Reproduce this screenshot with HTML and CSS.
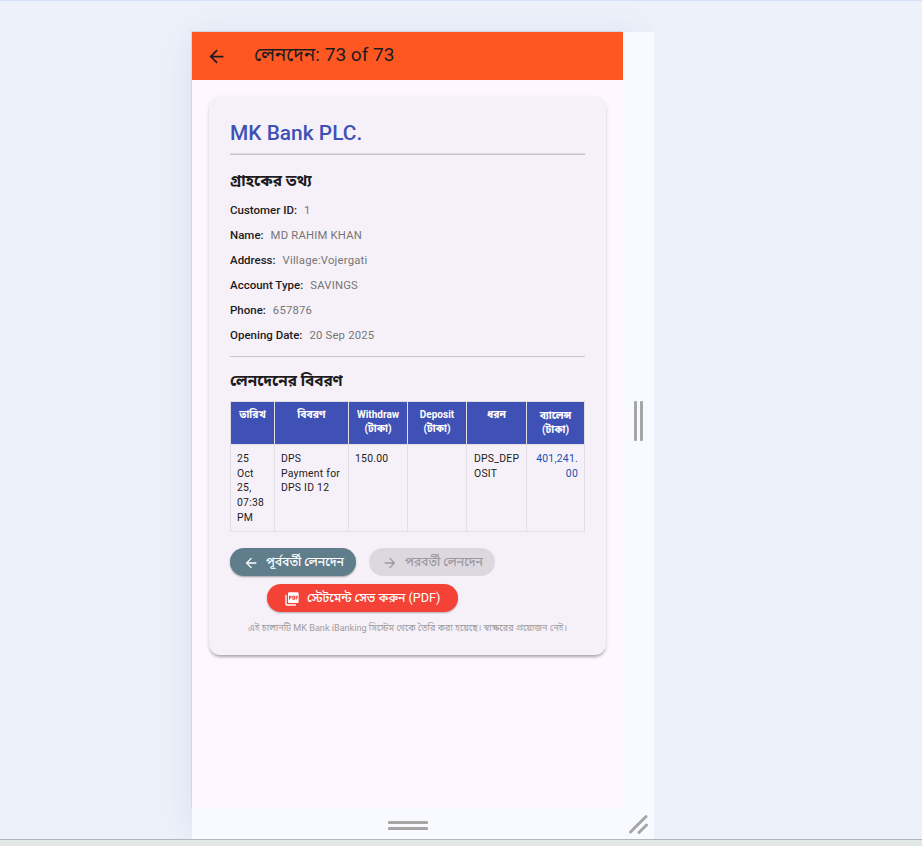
FILE: index.html
```html
<!DOCTYPE html>
<html lang="bn">
<head>
<meta charset="utf-8">
<title>MK Bank</title>
<link rel="stylesheet" href="styles.css">
</head>
<body>
<div class="stage">
  <div class="device">
    <main class="screen">
      <header class="appbar">
        <svg class="back" viewBox="0 0 24 24"><path d="M20 11H7.830l5.590-5.590L12 4l-8 8 8 8 1.410-1.410L7.830 13H20z"/></svg>
        <h1 class="title">লেনদেন: 73 of 73</h1>
      </header>
      <section class="card">
        <h2 class="bank">MK Bank PLC.</h2>
        <h3 class="subhead">গ্রাহকের তথ্য</h3>
        <dl class="info">
          <div class="row"><dt>Customer ID:</dt><dd>1</dd></div>
          <div class="row"><dt>Name:</dt><dd>MD RAHIM KHAN</dd></div>
          <div class="row"><dt>Address:</dt><dd>Village:Vojergati</dd></div>
          <div class="row"><dt>Account Type:</dt><dd>SAVINGS</dd></div>
          <div class="row"><dt>Phone:</dt><dd>657876</dd></div>
          <div class="row"><dt>Opening Date:</dt><dd>20 Sep 2025</dd></div>
        </dl>
        <h3 class="subhead details">লেনদেনের বিবরণ</h3>
        <div class="table">
          <div class="cell head">তারিখ</div>
          <div class="cell head">বিবরণ</div>
          <div class="cell head"><span class="latin">Withdraw</span><br>(টাকা)</div>
          <div class="cell head"><span class="latin">Deposit</span><br>(টাকা)</div>
          <div class="cell head">ধরন</div>
          <div class="cell head last">ব্যালেন্স<br>(টাকা)</div>
          <div class="cell">25<br>Oct<br>25,<br>07:38<br>PM</div>
          <div class="cell">DPS<br>Payment for<br>DPS ID 12</div>
          <div class="cell">150.00</div>
          <div class="cell"></div>
          <div class="cell type">DPS_DEP<br>OSIT</div>
          <div class="cell balance">401,241.<br>00</div>
        </div>
        <div class="nav">
          <button class="btn prev"><svg viewBox="0 0 24 24"><path d="M20 11H7.830l5.590-5.590L12 4l-8 8 8 8 1.410-1.410L7.830 13H20z"/></svg><span>পূর্ববর্তী লেনদেন</span></button>
          <button class="btn next" disabled><svg viewBox="0 0 24 24"><path d="M12 4l-1.410 1.410L16.170 11H4v2h12.170l-5.580 5.590L12 20l8-8z"/></svg><span>পরবর্তী লেনদেন</span></button>
        </div>
        <button class="btn save"><svg viewBox="0 0 24 24"><path d="M20 2H8c-1.100 0-2 .9-2 2v12c0 1.100.9 2 2 2h12c1.100 0 2-.9 2-2V4c0-1.100-.9-2-2-2zm-8.500 7.500c0 .83-.67 1.500-1.500 1.500H9v2H7.500V7H10c.83 0 1.500.67 1.500 1.500v1zm5 2c0 .83-.67 1.500-1.500 1.500h-2.500V7H15c.83 0 1.500.67 1.500 1.500v3zm4-3H19v1h1.500V11H19v2h-1.500V7h3v1.500zM9 9.500h1v-1H9v1zM4 6H2v14c0 1.100.9 2 2 2h14v-2H4V6zm10 5.500h1v-3h-1v3z"/></svg><span>স্টেটমেন্ট সেভ করুন <span class="regular">(PDF)</span></span></button>
        <p class="note">এই চালানটি MK Bank iBanking সিস্টেম থেকে তৈরি করা হয়েছে। স্বাক্ষরের প্রয়োজন নেই।</p>
      </section>
    </main>
    <div class="grip right"><i></i><i></i></div>
    <div class="grip bottom"><i></i><i></i></div>
    <div class="corner"><svg viewBox="0 0 31 31"><path d="M7.500 24 23 8.500M16 24.500l7.500-7.500"/></svg></div>
  </div>
</div>
<div class="strip"></div>
</body>
</html>
```

FILE: styles.css
```css
* { box-sizing: border-box; }
body {
  margin: 0;
  width: 922px;
  height: 846px;
  overflow: hidden;
  font-family: Roboto, "Noto Sans Bengali", sans-serif;
  color: #1d1b20;
}
h1, h2, h3, dl, dd, p { margin: 0; }
.stage {
  height: 839px;
  padding: 31px 0 0 192px;
  background: #ecf1fa;
  border-top: 1px solid #d3e1fa;
  overflow: hidden;
}
.device {
  display: grid;
  grid-template: 776px 31px / 431px 31px;
  width: 462px;
  box-shadow: -6px 0 34px -6px rgba(90, 110, 130, .13);
  clip-path: inset(-60px 0 0 -60px);
  background: #f8faff;
}
.screen {
  background: #fef7ff;
  box-shadow: -1px -1px 0 #d4d7de;
}
.appbar {
  display: flex;
  height: 48px;
  background: #ff5722;
}
.back { width: 21px; height: 21px; margin: 14px 0 0 14px; fill: #1d1b20; }
.title {
  margin-left: 27px;
  font-size: 19.100px;
  line-height: 45px;
  font-weight: 400;
  white-space: nowrap;
}
.card {
  display: flex;
  flex-direction: column;
  width: 397px;
  height: 558px;
  margin: 17px 0 0 17px;
  padding: 21px;
  border-radius: 11px;
  background: #f6f1f9;
  box-shadow: 0 3px 3px -1px rgba(0, 0, 0, .28), 0 1px 4px rgba(0, 0, 0, .1);
}
.card > * { flex: none; }
.bank {
  height: 37px;
  border-bottom: 1px solid #c3bfcd;
  box-shadow: 0 -1px 0 #dfdae5 inset;
  color: #3f51b5;
  font-size: 20.900px;
  line-height: 30px;
  font-weight: 500;
}
.subhead {
  height: 42px;
  padding-top: 15px;
  font-size: 15.400px;
  line-height: 22px;
  font-weight: 700;
  white-space: nowrap;
}
.info {
  height: 160px;
  margin-bottom: 1px;
  padding-top: 1px;
  border-bottom: 1px solid #c9c3d0;
  font-size: 11.300px;
}
.row { display: flex; height: 25px; line-height: 25px; white-space: nowrap; }
.row dt { font-size: 11.500px; font-weight: 500; }
.row dd { margin-left: 7px; color: #757575; letter-spacing: .2px; }
.details { height: 43px; padding-top: 12px; font-size: 15.300px; }
.table {
  display: grid;
  grid-template: 43px 87px / 44px 74px 59px 59px 60px 58px;
  width: 355px;
  height: 131px;
  border-top: 1px solid #dcdce2;
  border-left: 1px solid #dcdce2;
}
.cell {
  padding: 7px 6px 0;
  border-right: 1px solid #dfdfe5;
  border-bottom: 1px solid #dfdfe5;
  font-size: 10.400px;
  line-height: 14.700px;
  letter-spacing: .25px;
  white-space: nowrap;
}
.type { padding-left: 7px; }
.head {
  padding: 6px 0 0;
  background: #3f51b5;
  color: #fff;
  font-size: 10.300px;
  line-height: 14px;
  font-weight: 700;
  letter-spacing: 0;
  text-align: center;
}
.latin { font-size: 10px; }
.last { padding-top: 7px; }
.balance { color: #1850ad; text-align: right; }
.nav { display: flex; gap: 13px; margin-top: 16px; }
.btn {
  display: flex;
  align-items: center;
  flex: none;
  width: 126px;
  height: 28px;
  padding: 1px 0 0 13px;
  border: 0;
  border-radius: 14px;
  font: 500 12.200px Roboto, "Noto Sans Bengali", sans-serif;
  color: #fff;
  white-space: nowrap;
}
.btn svg { width: 16px; height: 16px; margin-right: 7px; fill: currentColor; flex: none; }
.prev { background: #607d8b; box-shadow: 0 1px 2px rgba(0, 0, 0, .35); }
.next { background: #ddd8e0; color: #9b989f; }
.regular { font-size: 12.600px; font-weight: 400; }
.save {
  width: 191px;
  margin: 8px 0 0 37px;
  padding: 1px 0 0 17px;
  background: #f44336;
  box-shadow: 0 1px 2px rgba(0, 0, 0, .3);
}
.note {
  margin: 9px -10px 0;
  color: #9e9e9e;
  font-size: 9.100px;
  line-height: 14px;
  text-align: center;
  white-space: nowrap;
}
.grip { display: flex; justify-content: center; align-items: center; gap: 3px; }
.grip i { width: 3px; height: 40px; border-radius: 1px; background: #a6a6a6; }
.right { padding-top: 2px; }
.bottom { flex-direction: column; padding-top: 3px; }
.bottom i { width: 40px; height: 3px; }
.corner svg { display: block; width: 31px; height: 31px; fill: none; stroke: #a6a6a6; stroke-width: 3; stroke-linecap: round; }
.strip { height: 7px; border-top: 1px solid #b1b8ba; background: #e1e7e6; }
```
